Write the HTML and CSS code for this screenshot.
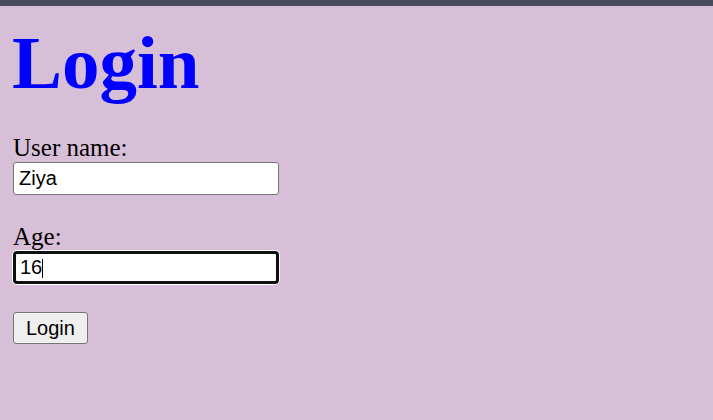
FILE: index.html
```html
<!DOCTYPE html>
<html lang="en">
<head>
<meta charset="utf-8">
<title>Login</title>
<link rel="stylesheet" href="styles.css">
</head>
<body>
<div class="topbar"></div>
<main class="page">
  <h1 class="title">Login</h1>
  <form class="login-form" onsubmit="return false">
    <label class="field-label" for="username">User name:</label>
    <input class="field-input" id="username" type="text" value="Ziya">
    <label class="field-label field-label--spaced" for="age">Age:</label>
    <div class="input-wrap">
      <input class="field-input field-input--focused" id="age" type="text" value="16">
      <span class="caret"></span>
    </div>
    <button class="submit-btn" type="submit">Login</button>
  </form>
</main>
</body>
</html>
```

FILE: styles.css
```css
html, body {
  margin: 0;
  padding: 0;
}

body {
  background: #d8bfd8;
  font-family: "Liberation Serif", "Times New Roman", serif;
  font-size: 25px;
  color: #000;
  min-height: 420px;
}

.topbar {
  height: 6px;
  background: #474a5a;
}

.page {
  padding: 0 12px;
}

.title {
  margin: 15px 0 0 0;
  font-family: "Liberation Serif", "Times New Roman", serif;
  font-size: 75px;
  line-height: 83px;
  font-weight: bold;
  color: #0000ff;
}

.login-form {
  margin-top: 30px;
  display: flex;
  flex-direction: column;
  align-items: flex-start;
}

.field-label {
  display: block;
  line-height: 28px;
  font-size: 25px;
  padding-left: 1px;
}

.field-label--spaced {
  margin-top: 28px;
}

.field-input {
  box-sizing: border-box;
  margin: 0 0 0 1px;
  width: 266px;
  height: 33px;
  padding: 0 4px 0 5px;
  border: 1px solid #767676;
  border-radius: 3px;
  background: #fff;
  font-family: "Liberation Sans", Arial, sans-serif;
  font-size: 20px;
  color: #000;
  outline: none;
}

.input-wrap {
  position: relative;
  display: flex;
}

.field-input--focused {
  border: 3px solid #101010;
  border-radius: 4px;
  padding-left: 4px;
  box-shadow: 0 0 0 1px #fff;
}

.caret {
  position: absolute;
  left: 30px;
  top: 8px;
  width: 1px;
  height: 19px;
  background: #000;
}

.submit-btn {
  box-sizing: border-box;
  margin: 28px 0 0 1px;
  height: 32px;
  padding: 0 12px;
  border: 1px solid #767676;
  border-radius: 3px;
  background: #efefef;
  font-family: "Liberation Sans", Arial, sans-serif;
  font-size: 20px;
  color: #000;
}
```
